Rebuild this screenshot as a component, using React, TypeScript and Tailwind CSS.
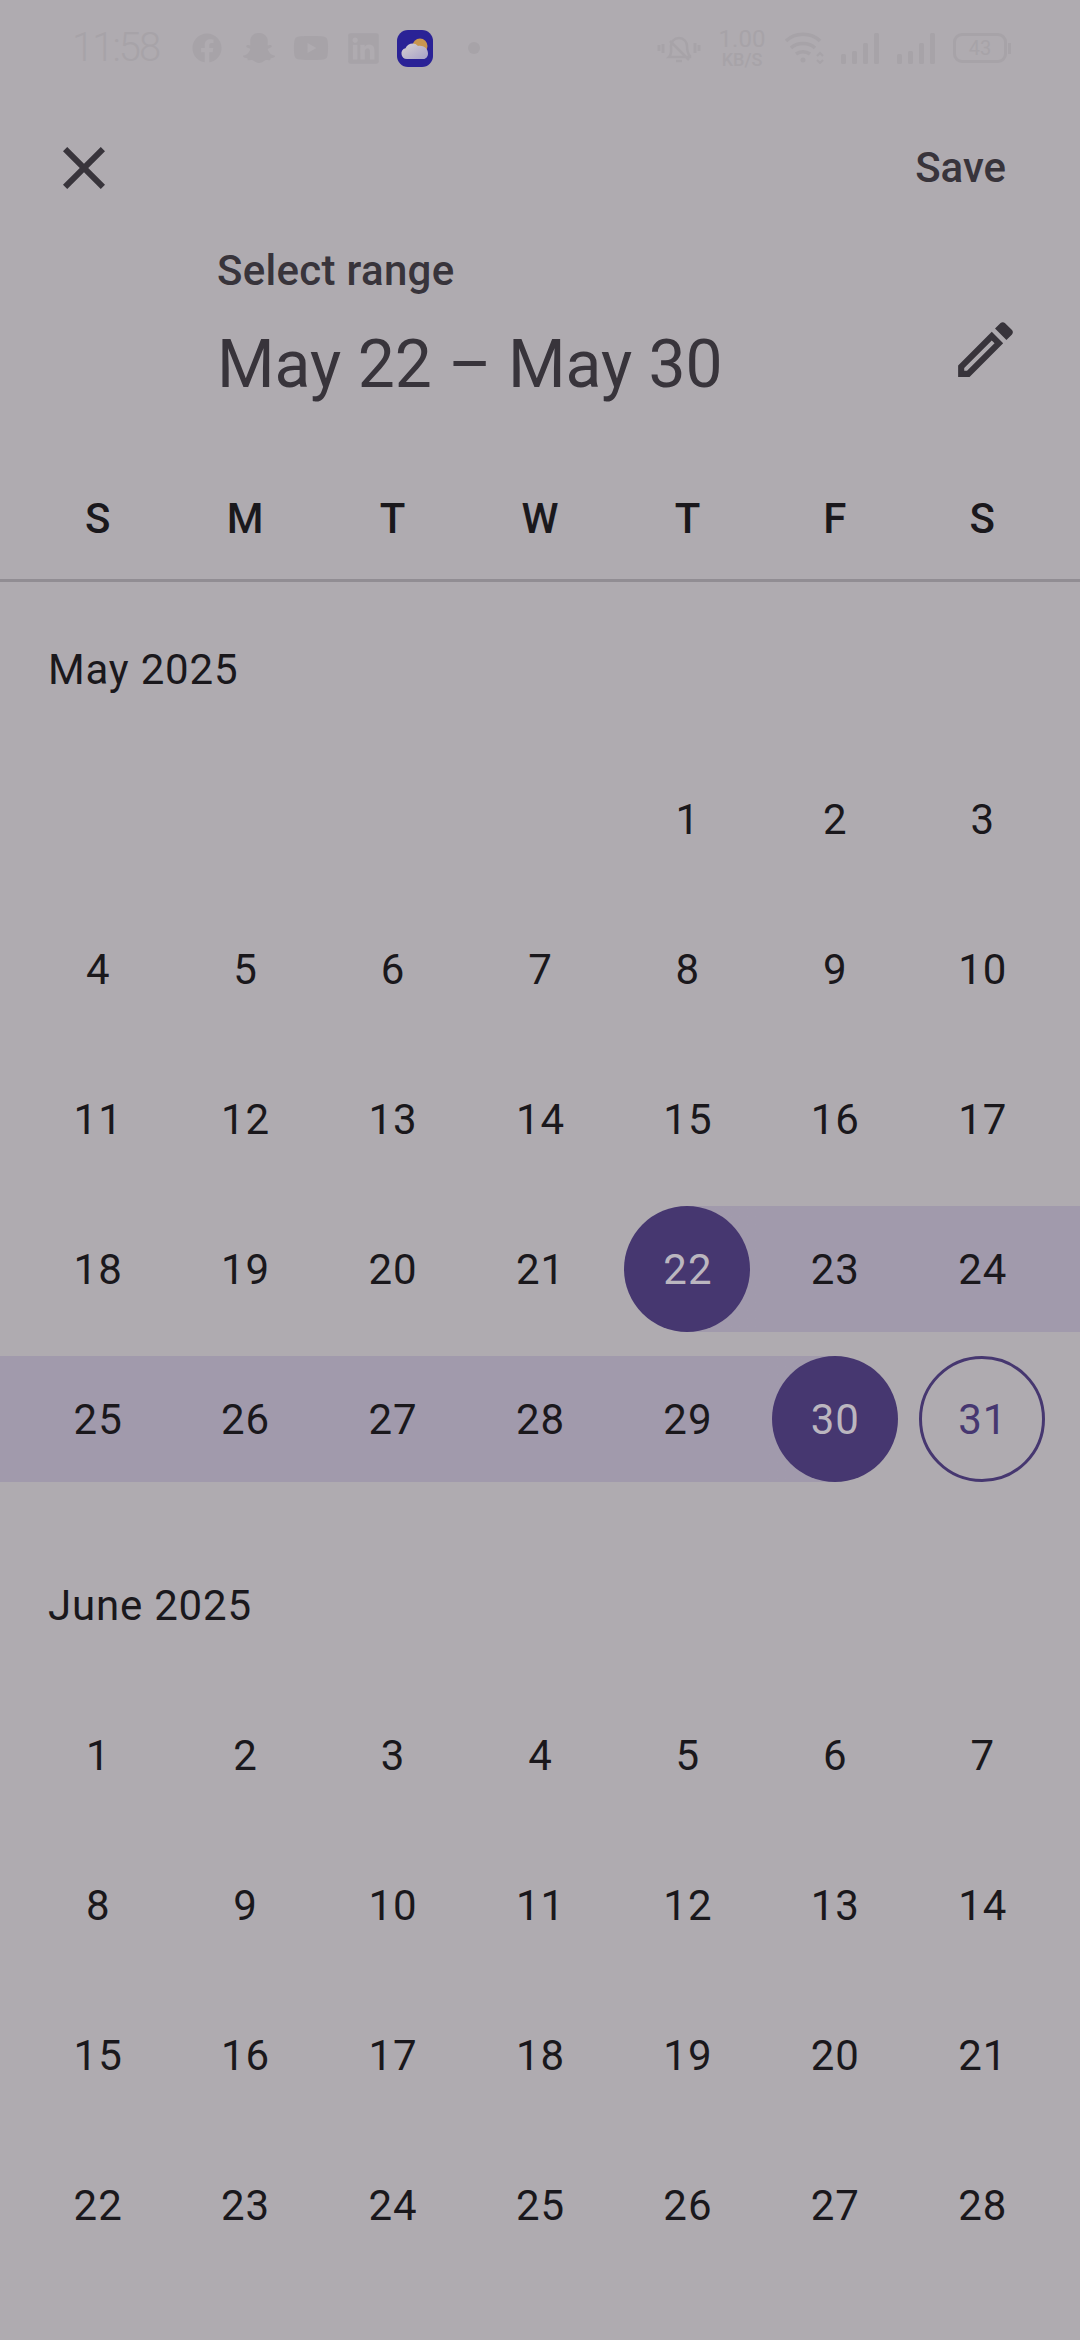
import React from "react";
import { FaFacebook, FaSnapchatGhost, FaYoutube, FaLinkedin } from "react-icons/fa";

const weekdays = ["S", "M", "T", "W", "T", "F", "S"];

type Month = { title: string; weeks: (number | null)[][] };

const months: Month[] = [
  {
    title: "May 2025",
    weeks: [
      [null, null, null, null, 1, 2, 3],
      [4, 5, 6, 7, 8, 9, 10],
      [11, 12, 13, 14, 15, 16, 17],
      [18, 19, 20, 21, 22, 23, 24],
      [25, 26, 27, 28, 29, 30, 31],
    ],
  },
  {
    title: "June 2025",
    weeks: [
      [1, 2, 3, 4, 5, 6, 7],
      [8, 9, 10, 11, 12, 13, 14],
      [15, 16, 17, 18, 19, 20, 21],
      [22, 23, 24, 25, 26, 27, 28],
    ],
  },
];

function Signal() {
  return (
    <svg width="38" height="32" viewBox="0 0 38 32" fill="#a7a3a8">
      <rect x="0" y="22" width="5" height="10" rx="1.5" />
      <rect x="11" y="19" width="5" height="13" rx="1.5" />
      <rect x="22" y="11" width="5" height="21" rx="1.5" />
      <rect x="33" y="1" width="5" height="31" rx="1.5" />
    </svg>
  );
}

function StatusBar() {
  return (
    <div className="flex h-[96px] items-center pl-[72px] text-[#a7a3a8]">
      <span className="w-[89px] text-[40px] font-light leading-none tracking-[-2px]">11:58</span>
      <div className="ml-[20px] flex w-[52px] justify-center">
        <FaFacebook className="text-[30px]" />
      </div>
      <div className="flex w-[52px] justify-center">
        <FaSnapchatGhost className="text-[32px]" />
      </div>
      <div className="flex w-[52px] justify-center">
        <FaYoutube className="text-[36px]" />
      </div>
      <div className="flex w-[52px] justify-center">
        <FaLinkedin className="text-[35px]" />
      </div>
      <div className="flex w-[52px] justify-center">
        <svg width="36" height="37" viewBox="0 0 36 37">
          <defs>
            <linearGradient id="cloud" x1="0" y1="0" x2="1" y2="1">
              <stop offset="0" stopColor="#d8d2d0" />
              <stop offset="1" stopColor="#a5a0c8" />
            </linearGradient>
          </defs>
          <rect width="36" height="37" rx="11" fill="#2a2296" />
          <circle cx="23" cy="16" r="7.5" fill="#c9964f" />
          <path d="M10 29a5.5 5.5 0 0 1-1.5-10.8c2-5 9-6.5 12.500-2.200 5-1 10 2 10 7.500 0 3-2 5.500-4.500 5.500z" fill="url(#cloud)" />
        </svg>
      </div>
      <span className="ml-[27px] h-[12px] w-[12px] rounded-full bg-[#a7a3a8]" />
      <svg width="44" height="32" viewBox="0 0 44 32" fill="none" stroke="#a7a3a8" strokeWidth="2.5" className="ml-[177px]">
        <path d="M2 13v6M6 12v9M38 11v10M42 13v6" strokeWidth="3" />
        <path d="M12 25c3-3 2-6 2-11 0-4 3-8 8-8s8 4 8 8c0 5 1 8 3 10v1H12zM19 29h6M13 9l19 19" />
      </svg>
      <div className="ml-[18px] flex w-[46px] flex-col items-center font-medium leading-none">
        <span className="text-[24px] font-normal">1.00</span>
        <span className="text-[18px]">KB/S</span>
      </div>
      <svg width="40" height="32" viewBox="0 0 40 32" fill="none" stroke="#a7a3a8" strokeWidth="3.5" className="ml-[20px]">
        <path d="M1 9c9-9 25-9 34 0M6 16c6-6 18-6 24 0M11 22c4-3 10-3 14 0" />
        <circle cx="18" cy="28" r="2.5" fill="#a7a3a8" stroke="none" />
        <path d="M32 24l3-3 3 3M32 28l3 3 3-3" strokeWidth="2" />
      </svg>
      <div className="ml-[16px]">
        <Signal />
      </div>
      <div className="ml-[18px]">
        <Signal />
      </div>
      <div className="ml-[18px] flex items-center">
        <div className="flex h-[30px] w-[54px] items-center justify-center rounded-[9px] border-[3px] border-[#a7a3a8] text-[20px] leading-none">
          43
        </div>
        <span className="ml-[1px] h-[11px] w-[3px] bg-[#a7a3a8]" />
      </div>
    </div>
  );
}

function Header() {
  return (
    <div className="mt-[36px] text-[#38343b]">
      <div className="flex h-[72px] items-center justify-between pl-[48px] pr-[74px]">
        <svg width="72" height="72" viewBox="0 0 24 24" fill="currentColor">
          <path d="M19 6.41 17.59 5 12 10.59 6.41 5 5 6.41 10.59 12 5 17.59 6.41 19 12 13.41 17.59 19 19 17.59 13.41 12z" />
        </svg>
        <span className="text-[42px] font-medium leading-none">Save</span>
      </div>
      <div className="mt-[39px] pl-[217px] text-[42px] font-medium leading-[56px] tracking-[0.3px]">Select range</div>
      <div className="mt-[14px] flex items-center justify-between pl-[217px] pr-[58px]">
        <span className="text-[66px] leading-[80px]">May 22 – May 30</span>
        <svg width="73" height="73" viewBox="0 0 24 24" fill="currentColor" className="mb-[30px]">
          <path d="M14.06 9.02l.92.92L5.92 19H5v-.92l9.06-9.06M17.66 3c-.25 0-.51.1-.7.29l-1.83 1.83 3.75 3.75 1.83-1.83c.39-.39.39-1.02 0-1.41l-2.34-2.34c-.2-.2-.45-.29-.71-.29zm-3.6 3.19L3 17.25V21h3.75L17.81 9.94l-3.75-3.75z" />
        </svg>
      </div>
    </div>
  );
}

function Week({ days, month }: { days: (number | null)[]; month: number }) {
  const inRange = (d: number | null) => month === 0 && d !== null && d >= 22 && d <= 30;
  const first = inRange(days[0]);
  const last = inRange(days[6]);

  return (
    <div className="grid h-[126px] grid-cols-[24px_repeat(7,1fr)_24px]">
      <div className={first ? "bg-[#a19aac]" : ""} />
      {days.map((d, i) => {
        const start = month === 0 && d === 22;
        const end = month === 0 && d === 30;
        const band = start
          ? "bg-gradient-to-r from-transparent from-50% to-[#a19aac] to-50%"
          : end
            ? "bg-gradient-to-r from-[#a19aac] from-50% to-transparent to-50%"
            : inRange(d)
              ? "bg-[#a19aac]"
              : "";
        const today = month === 0 && d === 31;
        return (
          <div key={i} className={`flex items-center justify-center ${band}`}>
            {d !== null && (
              <div
                className={`flex h-[126px] w-[126px] items-center justify-center rounded-full pl-[1px] text-[42px] tracking-[1px] ${
                  start || end
                    ? "bg-[#463770] text-[#bbb6bf]"
                    : today
                      ? "border-[3px] border-[#463770] text-[#463770]"
                      : "text-[#1a181c]"
                }`}
              >
                {d}
              </div>
            )}
          </div>
        );
      })}
      <div className={last ? "bg-[#a19aac]" : ""} />
    </div>
  );
}

export default function App() {
  return (
    <div className="h-[2340px] w-[1080px] overflow-hidden bg-[#afabb0] font-['Roboto',sans-serif]">
      <StatusBar />
      <Header />
      <div className="mt-[82px] grid h-[84px] grid-cols-7 border-b-[3px] border-[#918d93] px-6 text-[42px] font-medium leading-none text-[#1a181c]">
        {weekdays.map((d, i) => (
          <div key={i} className="text-center">
            {d}
          </div>
        ))}
      </div>
      {months.map((m, idx) => (
        <div key={m.title} className="pb-[36px]">
          <div className="flex h-[174px] items-center pl-[48px] text-[42px] tracking-[0.8px] text-[#1a181c]">{m.title}</div>
          <div className="flex flex-col gap-[24px]">
            {m.weeks.map((w, i) => (
              <Week key={i} days={w} month={idx} />
            ))}
          </div>
        </div>
      ))}
    </div>
  );
}
